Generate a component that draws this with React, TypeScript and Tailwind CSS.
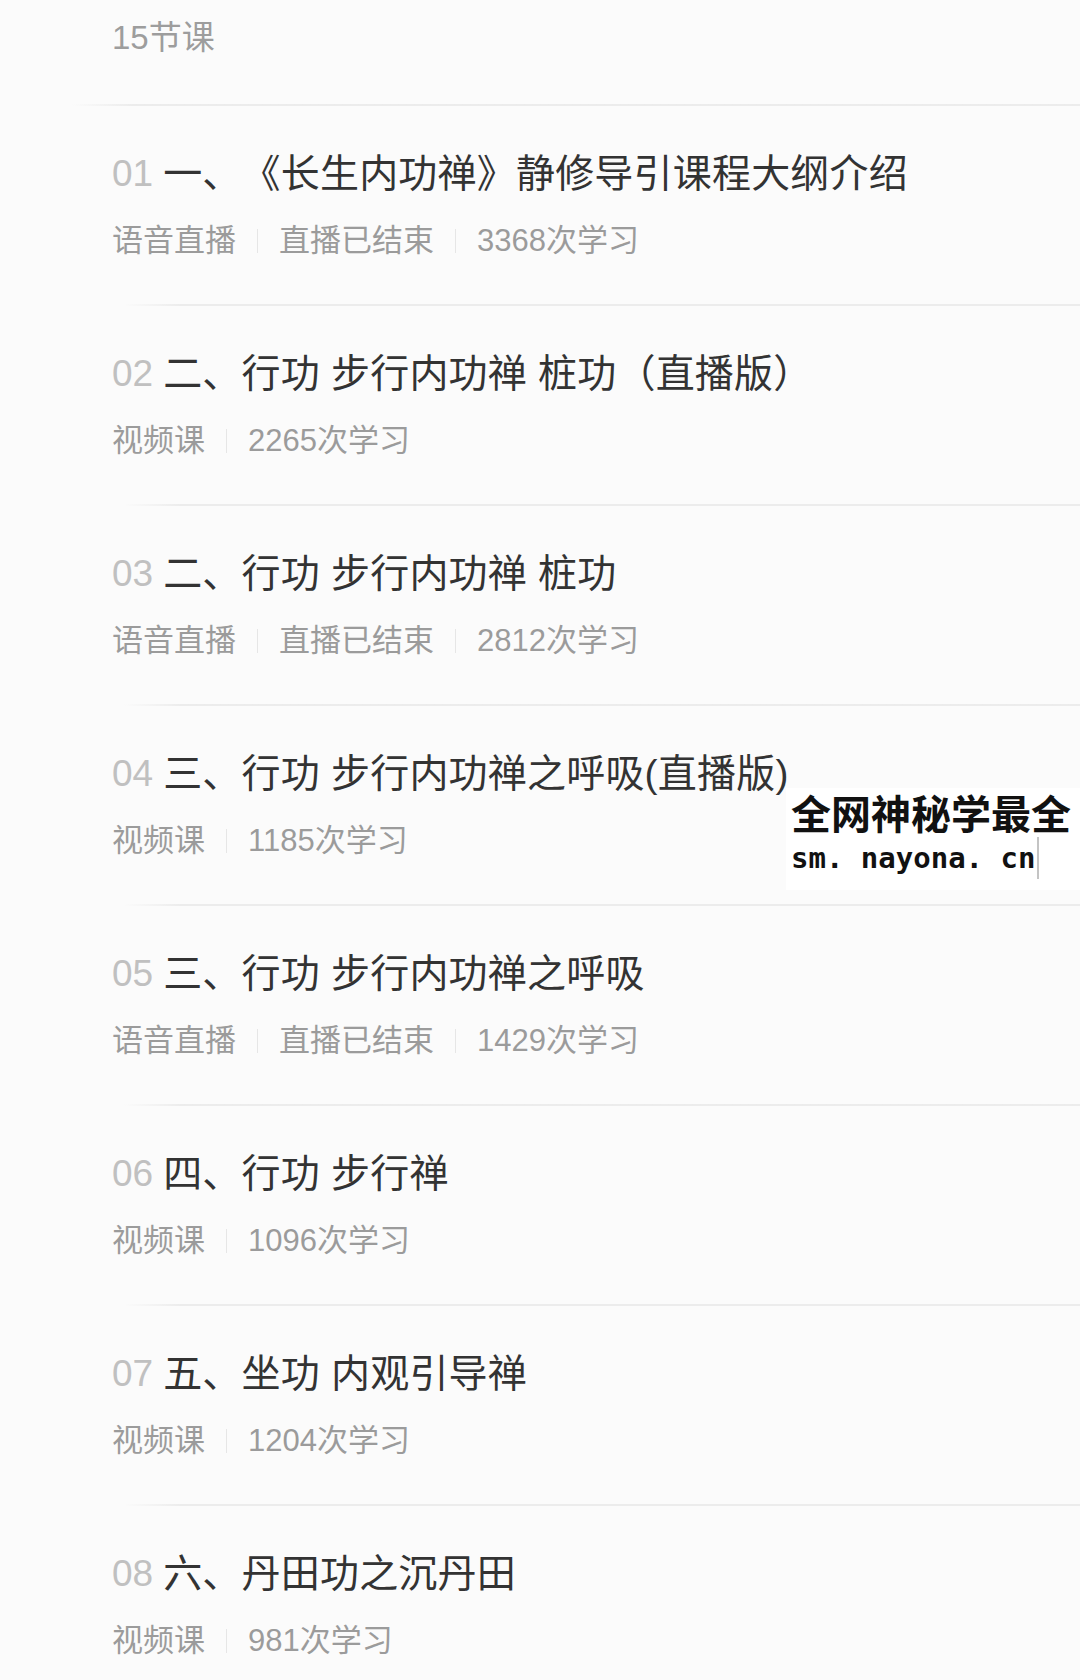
import React from 'react';

type Lesson = {
  no: string;
  title: React.ReactNode;
  tags: string[];
};

const lessons: Lesson[] = [
  {
    no: '01',
    title: (
      <>
        一、<span className="inline-block w-0" />《长生内功禅》静修导引课程大纲介绍
      </>
    ),
    tags: ['语音直播', '直播已结束', '3368次学习'],
  },
  { no: '02', title: '二、行功 步行内功禅 桩功（直播版）', tags: ['视频课', '2265次学习'] },
  { no: '03', title: '二、行功 步行内功禅 桩功', tags: ['语音直播', '直播已结束', '2812次学习'] },
  { no: '04', title: '三、行功 步行内功禅之呼吸(直播版)', tags: ['视频课', '1185次学习'] },
  { no: '05', title: '三、行功 步行内功禅之呼吸', tags: ['语音直播', '直播已结束', '1429次学习'] },
  { no: '06', title: '四、行功 步行禅', tags: ['视频课', '1096次学习'] },
  { no: '07', title: '五、坐功 内观引导禅', tags: ['视频课', '1204次学习'] },
  { no: '08', title: '六、丹田功之沉丹田', tags: ['视频课', '981次学习'] },
];

const cjk = "font-['Liberation_Sans','Noto_Sans_CJK_SC',sans-serif]";

const Divider = ({ first }: { first?: boolean }) => (
  <div
    className={`h-[2px] bg-linear-to-r from-[#fbfbfb] via-[#ececec] via-[6%] to-[#ececec] ${first ? 'ml-[72px]' : 'ml-[124px]'}`}
  />
);

const LessonRow = ({ lesson }: { lesson: Lesson }) => (
  <div className="h-[198px] pl-[112px] pt-[44px]">
    <div className="flex items-center h-[48px] whitespace-nowrap">
      <span className="text-[37px] text-[#c0c0c0] font-['Liberation_Sans',sans-serif]">{lesson.no}</span>
      <span className="ml-[10px] text-[39px] text-[#333333] tracking-[0.2px]">{lesson.title}</span>
    </div>
    <div className="mt-[23px] flex items-center h-[40px] text-[31px] text-[#9b9b9b] whitespace-nowrap">
      {lesson.tags.map((tag, i) => (
        <React.Fragment key={tag}>
          {i > 0 && <span className="mx-[21px] w-px h-[24px] bg-[#e6e6e6]" />}
          <span>{tag}</span>
        </React.Fragment>
      ))}
    </div>
  </div>
);

export default function App() {
  return (
    <div className={`relative w-[1080px] h-[1680px] overflow-hidden bg-[#fbfbfb] ${cjk}`}>
      {/* header */}
      <div className="h-[104px] pl-[112px] pt-[16px]">
        <p className="text-[33px] leading-[44px] text-[#9d9d9d]">15节课</p>
      </div>

      {lessons.map((lesson, idx) => (
        <div key={lesson.no}>
          <Divider first={idx === 0} />
          <LessonRow lesson={lesson} />
        </div>
      ))}

      {/* watermark */}
      <div className="absolute left-[786px] top-[788px] w-[294px] h-[102px] bg-white pl-[5px] pt-[2px]">
        <p className="text-[40px] leading-[44px] font-bold text-[#111] font-['Noto_Sans_CJK_SC',sans-serif]">
          全网神秘学最全
        </p>
        <div className="flex items-center">
          <p className="text-[29px] leading-[48px] font-bold text-[#111] font-['DejaVu_Sans_Mono',monospace]">
            sm. nayona. cn
          </p>
          <span className="ml-[2px] w-[2px] h-[42px] bg-[#c4c4c4]" />
        </div>
      </div>
    </div>
  );
}
